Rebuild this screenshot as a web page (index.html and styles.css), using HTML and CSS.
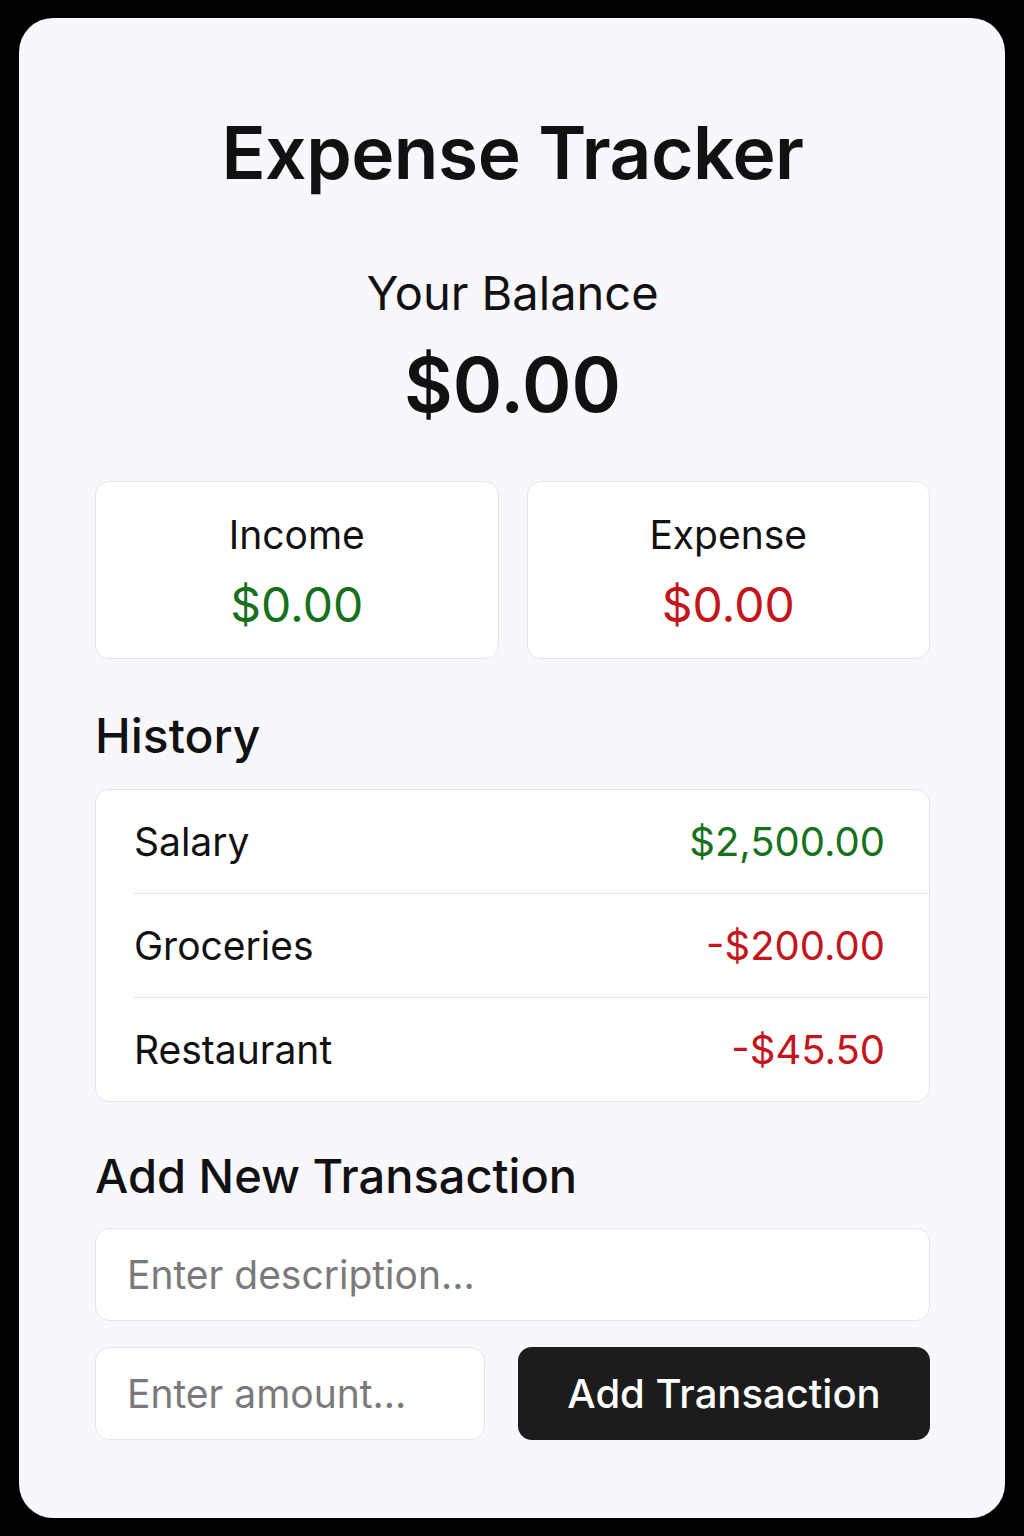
FILE: index.html
```html
<!DOCTYPE html>
<html lang="en">
<head>
  <meta charset="UTF-8" />
  <meta name="viewport" content="width=device-width, initial-scale=1.0"/>
  <title>Expense Tracker</title>
  <link rel="stylesheet" href="styles.css">
</head>
<body>
  <div class="container">
    <h1>Expense Tracker</h1>

    <div class="balance">
      <h4>Your Balance</h4>
      <div class="balance-amount">$0.00</div>
    </div>

    <div class="summary">
      <div class="summary-box">
        <h4>Income</h4>
        <p class="money plus">$0.00</p>
      </div>
      <div class="summary-box">
        <h4>Expense</h4>
        <p class="money minus">$0.00</p>
      </div>
    </div>

    <h3>History</h3>
    <ul class="list">
      <li>
        <span>Salary</span>
        <span class="amount plus">$2,500.00</span>
      </li>
      <li>
        <span>Groceries</span>
        <span class="amount minus">-$200.00</span>
      </li>
      <li>
        <span>Restaurant</span>
        <span class="amount minus">-$45.50</span>
      </li>
    </ul>

    <h3 class="form-title">Add New Transaction</h3>
    <form id="form">
      <input type="text" id="text" class="field" placeholder="Enter description..." />
      <div class="form-row">
        <input type="number" id="amount" class="field" placeholder="Enter amount..." />
        <button type="submit" class="btn">Add Transaction</button>
      </div>
    </form>
  </div>
</body>
</html>
```

FILE: styles.css
```css
body {
  margin: 0;
  background-color: #000;
  font-family: 'Inter', 'Noto Sans', sans-serif;
  color: #111;
}
.container {
  margin: 18px 19px;
  height: 1500px;
  box-sizing: border-box;
  padding: 93px 75px 0 76px;
  background: #f8f8fc;
  border-radius: 34px;
}
h1 {
  margin: 0;
  text-align: center;
  font-size: 73px;
  font-weight: 600;
  line-height: 84px;
  letter-spacing: -0.5px;
}
.balance {
  margin-top: 72px;
  text-align: center;
}
.balance h4 {
  margin: 0;
  font-size: 47px;
  font-weight: 400;
  line-height: 52px;
}
.balance-amount {
  margin-top: 24px;
  font-size: 75px;
  font-weight: 600;
  line-height: 84px;
}
.summary {
  display: grid;
  grid-template-columns: 1fr 1fr;
  gap: 28px;
  margin-top: 54px;
}
.summary-box {
  height: 178px;
  box-sizing: border-box;
  padding-top: 30px;
  background: #fff;
  border: 1px solid #e4e4ea;
  border-radius: 14px;
  text-align: center;
}
.summary-box h4 {
  margin: 0;
  font-size: 39px;
  font-weight: 400;
  line-height: 46px;
}
.money {
  margin: 20px 0 0;
  font-size: 48px;
  line-height: 54px;
}
.plus {
  color: #17701c;
}
.minus {
  color: #c4141c;
}
h3 {
  margin: 50px 0 26px;
  font-size: 48px;
  font-weight: 500;
  line-height: 54px;
}
.form-title {
  margin: 47px 0 25px;
  font-size: 47px;
}
.list {
  list-style: none;
  margin: 0;
  padding: 0 0 0 38px;
  background: #fff;
  border: 1px solid #e4e4ea;
  border-radius: 14px;
}
.list li {
  display: flex;
  justify-content: space-between;
  align-items: center;
  height: 103px;
  padding-right: 44px;
  font-size: 39px;
  border-bottom: 1px solid #e4e4ea;
}
.list li:last-child {
  border-bottom: none;
}
.list .amount {
  font-size: 40px;
}
#form {
  display: flex;
  flex-direction: column;
  gap: 26px;
}
.form-row {
  display: grid;
  grid-template-columns: 390px 1fr;
  gap: 33px;
}
.field {
  height: 93px;
  box-sizing: border-box;
  padding: 0 31px;
  background: #fff;
  border: 1px solid #e4e4ea;
  border-radius: 14px;
  font-family: inherit;
  font-size: 39px;
  color: #111;
  outline: none;
}
.field::placeholder {
  color: #7a7a7a;
}
.btn {
  height: 93px;
  background-color: #1c1c1c;
  color: #fff;
  font-family: inherit;
  font-size: 40px;
  font-weight: 500;
  border: none;
  border-radius: 14px;
  cursor: pointer;
}
```
